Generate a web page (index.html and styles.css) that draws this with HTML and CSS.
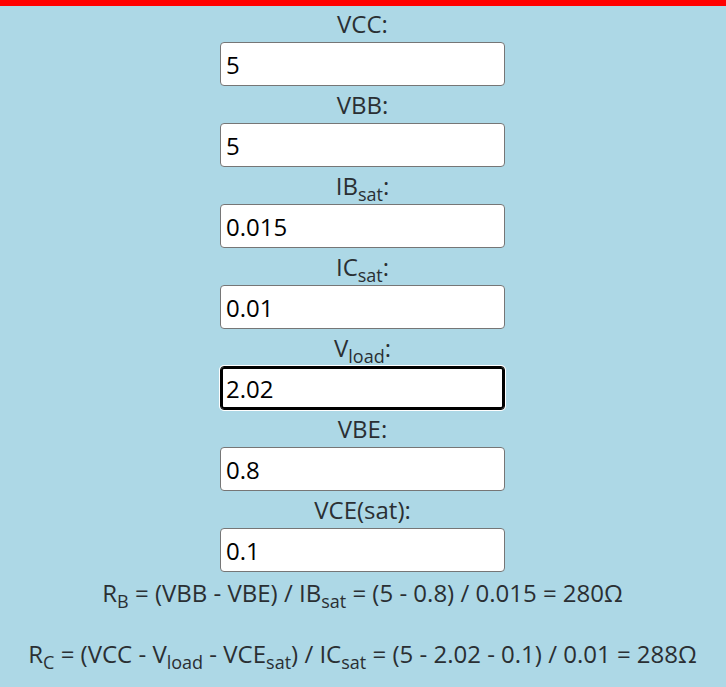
FILE: index.html
```html
<!DOCTYPE html>
<html lang="en">
<head>
<meta charset="utf-8">
<title>Transistor saturation calculator</title>
<link rel="stylesheet" href="styles.css">
</head>
<body>
<div class="topbar"></div>
<main class="calc">
  <div class="field">
    <label class="label" for="vcc">VCC:</label>
    <input class="input" id="vcc" type="text" value="5">
  </div>
  <div class="field">
    <label class="label" for="vbb">VBB:</label>
    <input class="input" id="vbb" type="text" value="5">
  </div>
  <div class="field">
    <label class="label" for="ib">IB<sub>sat</sub>:</label>
    <input class="input" id="ib" type="text" value="0.015">
  </div>
  <div class="field">
    <label class="label" for="ic">IC<sub>sat</sub>:</label>
    <input class="input" id="ic" type="text" value="0.01">
  </div>
  <div class="field">
    <label class="label" for="vload">V<sub>load</sub>:</label>
    <input class="input focused" id="vload" type="text" value="2.02">
  </div>
  <div class="field">
    <label class="label" for="vbe">VBE:</label>
    <input class="input" id="vbe" type="text" value="0.8">
  </div>
  <div class="field">
    <label class="label" for="vce">VCE(sat):</label>
    <input class="input" id="vce" type="text" value="0.1">
  </div>
  <p class="result">R<sub>B</sub> = (VBB - VBE) / IB<sub>sat</sub> = (5 - 0.8) / 0.015 = 280Ω</p>
  <p class="result">R<sub>C</sub> = (VCC - V<sub>load</sub> - VCE<sub>sat</sub>) / IC<sub>sat</sub> = (5 - 2.02 - 0.1) / 0.01 = 288Ω</p>
</main>
</body>
</html>
```
FILE: styles.css
```css
html, body {
  margin: 0;
  padding: 0;
}
body {
  background: #add8e6;
  color: #2a2f33;
  font-family: "Open Sans", "Noto Sans", sans-serif;
  font-size: 24px;
}
.topbar {
  height: 6px;
  background: #ff0000;
}
.calc {
  display: flex;
  flex-direction: column;
  align-items: center;
  padding-right: 1px;
}
.field {
  display: flex;
  flex-direction: column;
  align-items: center;
  margin-bottom: 1px;
}
.label {
  display: block;
  height: 36px;
  line-height: 36px;
  text-align: center;
}
sub {
  font-size: 0.75em;
  line-height: 0;
  vertical-align: -0.35em;
}
.input {
  box-sizing: border-box;
  width: 285px;
  height: 44px;
  margin: 0;
  padding: 0 5px;
  border: 1px solid #767676;
  border-radius: 4px;
  background: #fff;
  color: #000;
  font-family: inherit;
  font-size: 24px;
  outline: none;
}
.focused {
  border-color: #000;
  box-shadow: inset 0 0 0 2px #000, 0 0 0 1px #fff;
}
.result {
  margin: 0;
  height: 42px;
  line-height: 42px;
  text-align: center;
  white-space: nowrap;
}
.field + .result {
  margin-top: -1px;
}
.result + .result {
  margin-top: 19px;
}
```
